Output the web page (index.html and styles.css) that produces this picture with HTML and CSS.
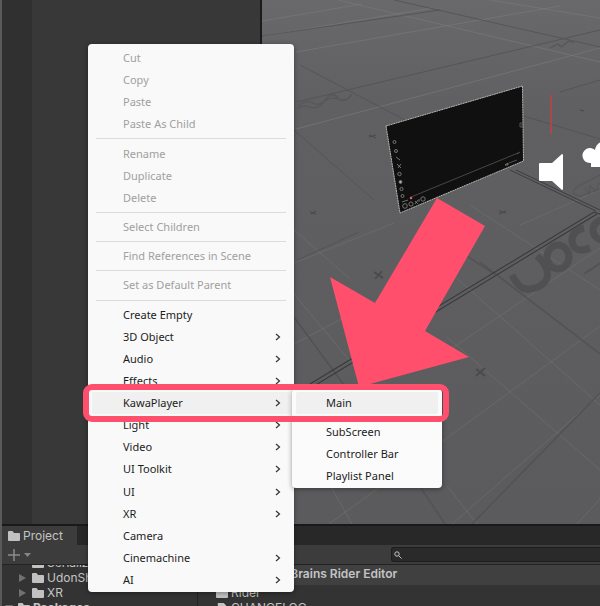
FILE: index.html
```html
<!DOCTYPE html>
<html lang="en">
<head>
<meta charset="utf-8">
<title>Editor</title>
<link rel="stylesheet" href="styles.css">
</head>
<body>
<svg class="defs" aria-hidden="true">
  <symbol id="folder" viewBox="0 0 12 10"><path d="M0 1q0-1 1-1h3.500l1.500 2h5q1 0 1 1v6q0 1-1 1H1q-1 0-1-1z"/></symbol>
  <symbol id="chevron" viewBox="0 0 6 8"><path d="M1 1l3.500 3L1 7" fill="none" stroke="#333" stroke-width="1.200"/></symbol>
  <symbol id="arrow" viewBox="0 0 8 8"><path d="M0 0l7 4-7 4z"/></symbol>
</svg>
<div class="editor">
  <main class="workspace">
    <section class="hierarchy"></section>
    <section class="scene">
      <svg class="view" viewBox="262 0 338 524" preserveAspectRatio="xMinYMin slice" role="img" aria-label="Scene view">
        <defs>
          <linearGradient id="floor" x1="0" y1="0" x2="0" y2="1">
            <stop offset="0" stop-color="#69696c"/><stop offset=".2" stop-color="#606062"/><stop offset="1" stop-color="#5b5b5d"/>
          </linearGradient>
        </defs>
        <rect x="262" width="338" height="524" fill="url(#floor)"/>
        <g fill="none" stroke="#79797a" stroke-width=".7">
          <path d="M262 21l100-17M264 36L432 8M296 52L560 6M296 129L600 48M338 0l262 62M490 0l110 18"/>
          <path stroke="#6e6e6f" d="M294 263l100-40M294 344l95-50M294 294l75 90M294 230l55 48M329 524l103-75 168-123M452 524L600 395M577 524l23-25M470 205l130 85M447 337l153 133M425 250l175 155M330 485l22 39M447 486l30 38M600 248l-155 105M520 225l80-35"/>
        </g>
        <g fill="none" stroke="#525254">
          <path stroke-width=".8" d="M297 102L600 30M262 36l178-26M394 0l206 47M300 65l105 55M294 130l80 70M520 115l80 24M297 260l62-28M600 80l-40 12"/>
          <path stroke-width="1.500" d="M480 262l120 92M464 254l30 20M600 393L472 524M421 488l24 36M294 317l55 75"/>
        </g>
        <g fill="none" stroke="#39393b" stroke-width="1.100">
          <path d="M310 384L594 212l6 2M314 386L597 214"/>
          <path stroke-width=".9" d="M510 170l86 41M516 170l84 40"/>
        </g>
        <g fill="none" stroke="#4a4a4c" stroke-width="1.800">
          <path d="M476 369l9 7m0-8l-9 8M374 272l9 6m-1-7l-7 8"/>
          <path stroke-width="1.200" d="M369 135l7 3m0-3l-7 2M310 212l6 2m0-3l-5 3M499 211l7 2m0-2l-7 3M580 110l4 1"/>
          <path stroke="#525254" d="M584 274l18-12"/>
        </g>
        <g fill="none" stroke="#505052" stroke-width="7">
          <path d="M512 275q8 16 18 14 14-2 17-11 3-10-10-22"/>
          <ellipse cx="558" cy="257" rx="11" ry="12"/><path d="M590 248q-15 6-18-6-1-11 12-14"/><ellipse cx="603" cy="230" rx="10" ry="10"/>
        </g>
        <g fill="none" stroke="#57575a" stroke-width="1.300">
          <path d="M577 187q-8 7 3 9l20-7M577 187l23-12M585 188l4 6 1-8 6 5 3-9M298 106q8-7 15-3t13-4 12-1 14-4q-5 8-14 5t-15 4-14 4-11 2M550 48l8-4 3 3 8-6 5 2"/>
        </g>
        <path d="M386 126L522.500 86l1 75L400 213z" fill="#101010" stroke="#b5b5b3" stroke-width="1" stroke-dasharray="2 .5"/>
        <g fill="none" stroke="#8a8a8a" stroke-width=".8">
          <path d="M411 197L518 153" stroke="#555"/>
          <circle cx="394.500" cy="142" r="1.500"/><circle cx="396" cy="151" r="1.500"/><path d="M396 157l4 3M397 164l4 4m0-4l-3 4"/><circle cx="399.500" cy="174" r="1.700"/><circle cx="400.500" cy="182" r="1.400" fill="#aaa"/><circle cx="401.500" cy="189" r="1.600"/><circle cx="402.500" cy="196" r="1.500"/>
          <circle cx="405" cy="206" r="2.300"/><circle cx="411" cy="204" r="2.100"/><path d="M415 201l3 3m0-4l-3 4m4-5v3M402 202l6-2"/><circle cx="423" cy="199" r="2.200"/>
          <path d="M505 165l3-2v2z"/><path d="M509 163l8-3M517 154l3-2M520 123h2v4h-2z" stroke="#666"/>
        </g>
        <circle cx="411" cy="198" r="1.300" fill="#ef5764"/>
        <path d="M551 95v39" stroke="#d43b40" stroke-width="1.300"/>
        <path d="M540 163h12l10-9q1 0 1 1v34q0 1-1 1l-10-9h-12q-1 0-1-1v-16q0-1 1-1z" fill="#fff"/>
        <path d="M591 167v-4a7.500 7.500 0 1 1 4-13q1-6 6-8v25z" fill="#fff"/>
      </svg>
    </section>
  </main>
  <section class="project">
    <header class="tabs"><button class="tab"><svg class="folder"><use href="#folder"/></svg>Project</button></header>
    <div class="toolbar">
      <button class="add" aria-label="Add"><svg class="plus" viewBox="0 0 24 12"><path d="M6 0v12M0 6h12" fill="none" stroke="#8b8b8b" stroke-width="1.500"/><path d="M16 4h7l-3.500 4z" fill="#858585"/></svg></button>
      <label class="search"><svg class="lens" viewBox="0 0 8 8"><circle cx="3" cy="3" r="2.200"/><path d="M4.800 4.800L7.500 7.500"/></svg><input type="text" aria-label="Search"></label>
    </div>
    <div class="browser">
      <ul class="tree">
        <li><svg class="twist"></svg><svg class="folder"><use href="#folder"/></svg>Serializ</li>
        <li><svg class="twist"><use href="#arrow"/></svg><svg class="folder"><use href="#folder"/></svg>UdonSharp</li>
        <li><svg class="twist"><use href="#arrow"/></svg><svg class="folder"><use href="#folder"/></svg>XR</li>
        <li class="root"><svg class="twist" viewBox="0 0 8 8"><path d="M0 1h8L4 8z"/></svg><svg class="folder"><use href="#folder"/></svg>Packages</li>
      </ul>
      <div class="files">
        <h2>JetBrains Rider Editor</h2>
        <ul>
          <li><svg class="folder"><use href="#folder"/></svg>Rider</li>
          <li><svg class="folder" viewBox="0 0 12 12"><path d="M1 0h7l3 3v9H1z"/></svg>CHANGELOG</li>
        </ul>
      </div>
    </div>
  </section>
</div>
<nav class="menu context">
  <button disabled>Cut</button><button disabled>Copy</button><button disabled>Paste</button><button disabled>Paste As Child</button>
  <hr>
  <button disabled>Rename</button><button disabled>Duplicate</button><button disabled>Delete</button>
  <hr>
  <button disabled>Select Children</button>
  <hr>
  <button disabled>Find References in Scene</button>
  <hr>
  <button disabled>Set as Default Parent</button>
  <hr>
  <button>Create Empty</button>
  <button>3D Object<svg><use href="#chevron"/></svg></button>
  <button>Audio<svg><use href="#chevron"/></svg></button>
  <button>Effects<svg><use href="#chevron"/></svg></button>
  <button class="active">KawaPlayer<svg><use href="#chevron"/></svg></button>
  <button>Light<svg><use href="#chevron"/></svg></button>
  <button>Video<svg><use href="#chevron"/></svg></button>
  <button>UI Toolkit<svg><use href="#chevron"/></svg></button>
  <button>UI<svg><use href="#chevron"/></svg></button>
  <button>XR<svg><use href="#chevron"/></svg></button>
  <button>Camera</button>
  <button>Cinemachine<svg><use href="#chevron"/></svg></button>
  <button>AI<svg><use href="#chevron"/></svg></button>
</nav>
<nav class="menu submenu">
  <button class="active">Main</button>
  <hr>
  <button>SubScreen</button><button>Controller Bar</button><button>Playlist Panel</button>
</nav>
<svg class="pointer" viewBox="0 0 140 190" aria-hidden="true"><path d="M107 0l48 28-60 105 44 26-110 30L0 79l45 26z" fill="#ff4f6c"/></svg>
<div class="callout"></div>
</body>
</html>
```
FILE: styles.css
```css
* { box-sizing: border-box; }
body { margin: 0; overflow: hidden; font: 12px/15px Inter, sans-serif; color: #c4c4c4; background: #383838; }
button { font: inherit; color: inherit; border: 0; background: none; padding: 0; text-align: left; }
ul { list-style: none; margin: 0; padding: 0; }
.defs { position: absolute; width: 0; height: 0; }
.editor { height: 100vh; display: flex; flex-direction: column; border-left: 2px solid #5a5a5a; }
.workspace { flex: 1; min-height: 0; display: flex; }
.hierarchy { width: 260px; border-left: 30px solid #303030; border-right: 2px solid #1b1b1b; background: #383838; }
.scene { flex: 1; min-width: 0; overflow: hidden; }
.view { display: block; width: 100%; height: 100%; }

.project { height: 82px; display: flex; flex-direction: column; border-top: 2px solid #191919; }
.tabs { display: flex; height: 19px; background: #282828; }
.tab { display: flex; align-items: center; gap: 3px; width: 75px; padding-left: 6px; background: #3c3c3c; }
.folder { width: 12px; height: 10px; fill: #c2c2c2; flex: none; }
.toolbar { display: flex; justify-content: space-between; align-items: center; height: 20px; background: #3c3c3c; border-bottom: 1px solid #232323; }
.add { display: flex; padding-left: 6px; }
.plus { width: 24px; height: 12px; }
.search { display: flex; align-items: center; width: 35%; height: 15px; padding-left: 2px; background: #2a2a2a; border: 1px solid #1d1d1d; border-right: 0; border-radius: 3px 0 0 3px; }
.lens { width: 8px; height: 8px; fill: none; stroke: #c4c4c4; }
.search input { flex: 1; min-width: 0; height: 12px; border: 0; background: none; color: inherit; font: inherit; }
.browser { flex: 1; min-height: 0; display: flex; background: #333; overflow: hidden; }
.tree { width: 196px; margin-top: -10px; border-right: 1px solid #242424; }
.tree li { display: flex; align-items: center; gap: 3px; height: 15px; padding-left: 17px; }
.twist { width: 8px; height: 8px; margin-right: 2px; fill: #717171; }
.tree .root { padding-left: 3px; font-weight: 700; }
.files { flex: 1; }
.files h2 { margin: 0; height: 20px; padding-left: 74px; background: #404040; font-size: 12px; line-height: 18px; font-weight: 600; white-space: nowrap; }
.files li { display: flex; align-items: center; gap: 3px; height: 15px; padding-left: 18px; }

.menu { position: absolute; display: flex; flex-direction: column; justify-content: space-between; padding: 3px 4px 1px; border-radius: 4px; background: #f9f9f9; box-shadow: 0 1px 5px #0006; color: #1c1c1c; font: 11px/22px "Noto Sans", sans-serif; }
.menu button { display: flex; align-items: center; justify-content: space-between; height: 22px; padding: 0 9px 0 31px; border-radius: 2px; white-space: nowrap; }
.menu button:disabled { color: #a0a0a0; }
.menu .active { background: #f0f0f0; }
.menu svg { width: 6px; height: 8px; }
.menu hr { height: 1px; margin: 3px 4px; border: 0; background: #dcdcdc; }
.context { left: 88px; top: 44px; width: 206px; min-height: 548px; }
.submenu { left: 292px; top: 389px; width: 150px; min-height: 99px; background: #fbfbfb; }
.submenu button { padding-left: 30px; }
.pointer { position: absolute; left: 330px; top: 198px; width: 140px; height: 190px; overflow: visible; }
.callout { position: absolute; left: 83px; top: 384px; width: 366px; height: 38px; border: 6px solid #ff4f6c; border-radius: 9px; }
```
